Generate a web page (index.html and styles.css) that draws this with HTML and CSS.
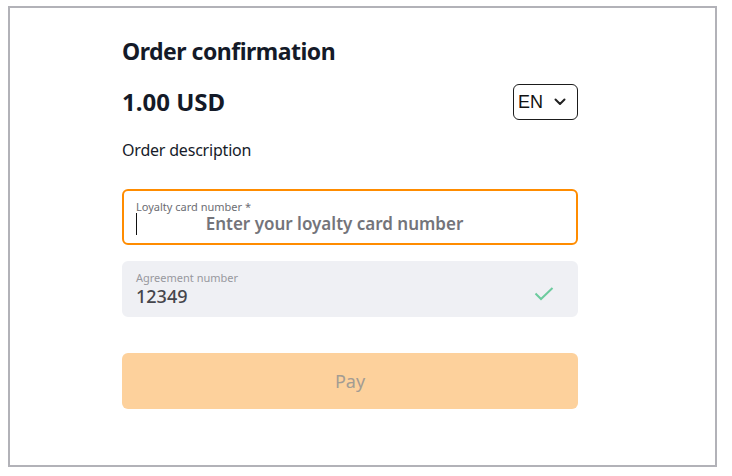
FILE: index.html
```html
<!DOCTYPE html>
<html lang="en">
<head>
<meta charset="utf-8">
<title>Order confirmation</title>
<link rel="stylesheet" href="styles.css">
</head>
<body>
<div class="frame">
  <main class="content">
    <h1 class="title">Order confirmation</h1>
    <div class="amount-row">
      <span class="amount">1.00 USD</span>
      <div class="lang">
        <span class="lang-text">EN</span>
        <svg class="chevron" width="12" height="8" viewBox="0 0 12 8"><path d="M1.5 1.5 L6 6 L10.5 1.5" fill="none" stroke="#222" stroke-width="2" stroke-linecap="round" stroke-linejoin="round"/></svg>
      </div>
    </div>
    <p class="desc">Order description</p>
    <div class="field field-active">
      <div class="field-body">
        <div class="field-label">Loyalty card number *</div>
        <div class="field-input">
          <span class="caret"></span>
          <span class="placeholder">Enter your loyalty card number</span>
        </div>
      </div>
    </div>
    <div class="field field-filled">
      <div class="field-body">
        <div class="field-label label-muted">Agreement number</div>
        <div class="field-value">12349</div>
      </div>
      <svg class="check" width="20" height="14" viewBox="0 0 20 14"><path d="M1.5 6.5 L7 12 L18.5 1" fill="none" stroke="#6ccb9e" stroke-width="2"/></svg>
    </div>
    <button class="pay" type="button">Pay</button>
  </main>
</div>
</body>
</html>
```

FILE: styles.css
```css
* { box-sizing: border-box; }

html, body {
  margin: 0;
  padding: 0;
  background: #ffffff;
}

body {
  padding: 6px 0 0 8px;
  font-family: "Noto Sans", "Open Sans", sans-serif;
  color: #161b29;
}

.frame {
  width: 709px;
  height: 461px;
  border: 2px solid #b2b2b8;
  background: #ffffff;
}

.content {
  width: 568px;
  padding: 28px 0 0 112px;
  display: flex;
  flex-direction: column;
}

.title {
  margin: 0;
  font-size: 23px;
  letter-spacing: -0.5px;
  line-height: 30px;
  font-weight: 700;
  color: #141a28;
}

.amount-row {
  margin-top: 18px;
  display: flex;
  align-items: center;
  justify-content: space-between;
  height: 36px;
}

.amount {
  font-size: 24px;
  font-weight: 700;
  line-height: 30px;
  color: #141a28;
}

.lang {
  width: 65px;
  height: 36px;
  border: 1px solid #1b1b1b;
  border-radius: 6px;
  display: flex;
  align-items: center;
  padding: 0 10px 0 4px;
  gap: 11px;
}

.lang-text {
  font-family: "Liberation Sans", Arial, sans-serif;
  font-size: 18px;
  line-height: 20px;
  color: #111;
}

.chevron { display: block; }

.desc {
  margin: 18px 0 0;
  font-size: 16px;
  letter-spacing: -0.2px;
  line-height: 24px;
  color: #161b29;
}

.field {
  height: 56px;
  border-radius: 6px;
  border: 2px solid transparent;
  padding: 9px 22px 0 12px;
  display: flex;
  align-items: flex-start;
  justify-content: space-between;
}

.field-active {
  margin-top: 27px;
  border-color: #ff8c00;
}

.field-filled {
  margin-top: 16px;
  background: #eff0f4;
  border-color: #eff0f4;
  padding-top: 8px;
  align-items: center;
}

.field-filled .field-body { align-self: flex-start; }

.field-body {
  flex: 1;
  display: flex;
  flex-direction: column;
}

.field-label {
  font-size: 11px;
  line-height: 13px;
  color: #6d6d73;
}

.label-muted { color: #98989e; }

.field-input {
  display: flex;
  align-items: center;
  height: 22px;
  padding-right: 22px;
}

.caret {
  width: 1px;
  height: 22px;
  background: #111;
}

.placeholder {
  flex: 1;
  text-align: center;
  font-size: 17px;
  line-height: 22px;
  font-weight: 600;
  color: #74747a;
}

.field-value {
  margin-top: 1px;
  font-size: 18px;
  line-height: 22px;
  font-weight: 500;
  color: #45454b;
}

.check { display: block; margin-top: 2px; }

.pay {
  margin-top: 36px;
  height: 56px;
  border: none;
  border-radius: 6px;
  background: #fdd19c;
  font-family: "Noto Sans", "Open Sans", sans-serif;
  font-size: 18px;
  color: #a39c93;
  cursor: default;
}
```
